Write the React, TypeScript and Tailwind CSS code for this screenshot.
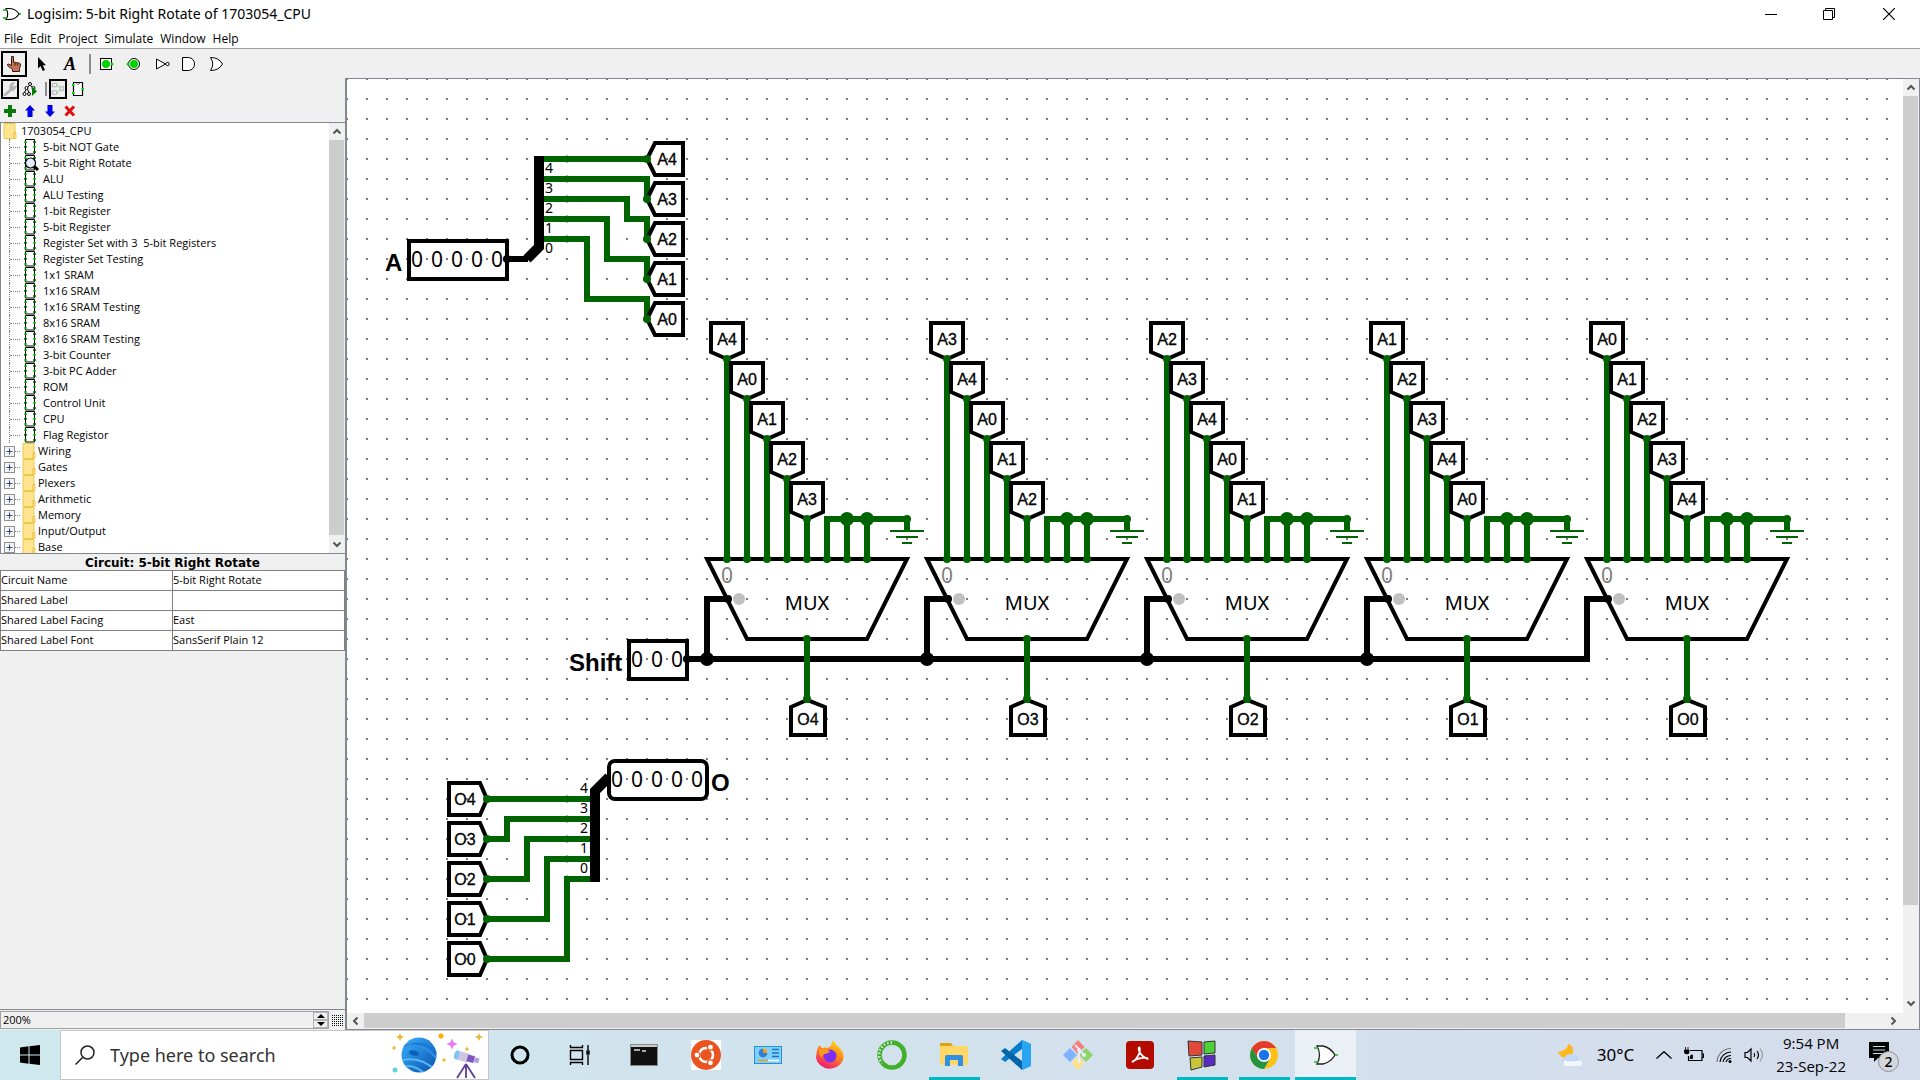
import React from "react";

const UI = "font-['Open_Sans','Noto_Sans',sans-serif]";
const GREEN = "#006400";

/* ---------- circuit canvas ---------- */

type Facing = "left" | "right" | "down" | "up";

const TAG_SHAPES: Record<Facing, string> = {
  left: "M0,0 L8,-16 H36 V16 H8 Z",
  right: "M0,0 L-7,-16 H-38 V16 H-7 Z",
  down: "M0,0 L-16,-7 V-36 H16 V-7 Z",
  up: "M0,1 L-16,8 V36 H18 V8 Z",
};
const TAG_TEXT: Record<Facing, [number, number]> = {
  left: [20, 6],
  right: [-22, 6],
  down: [0, -14],
  up: [1, 26],
};

function Tag({ x, y, facing, label }: { x: number; y: number; facing: Facing; label: string }) {
  const [tx, ty] = TAG_TEXT[facing];
  return (
    <g transform={`translate(${x},${y})`}>
      <path d={TAG_SHAPES[facing]} fill="none" stroke="#000" strokeWidth={4} />
      <text x={tx} y={ty} textAnchor="middle" fontSize={16} stroke="#000" strokeWidth={0.3} fontFamily="Liberation Sans, sans-serif">
        {label}
      </text>
      <circle r={4} fill={GREEN} />
    </g>
  );
}

function Digits({ x, y, count }: { x: number; y: number; count: number }) {
  return (
    <>
      {Array.from({ length: count }, (_, i) => (
        <text key={i} x={x + i * 20} y={y} textAnchor="middle" fontSize={21} fontFamily="Noto Sans, sans-serif">
          0
        </text>
      ))}
    </>
  );
}

const MUXES = [
  { x: 707, inputs: ["A4", "A0", "A1", "A2", "A3"], output: "O4" },
  { x: 927, inputs: ["A3", "A4", "A0", "A1", "A2"], output: "O3" },
  { x: 1147, inputs: ["A2", "A3", "A4", "A0", "A1"], output: "O2" },
  { x: 1367, inputs: ["A1", "A2", "A3", "A4", "A0"], output: "O1" },
  { x: 1587, inputs: ["A0", "A1", "A2", "A3", "A4"], output: "O0" },
];

function Mux({ x, inputs, output }: { x: number; inputs: string[]; output: string }) {
  return (
    <g transform={`translate(${x},0)`}>
      <path d="M0,559 H200 L160,639 H40 Z" fill="none" stroke="#000" strokeWidth={4} />
      <text x={20} y={583} textAnchor="middle" fontSize={21} fill="#808080" fontFamily="Noto Sans, sans-serif">0</text>
      <circle cx={32} cy={599} r={6} fill="#c0c0c0" />
      <circle cx={21} cy={599} r={4} />
      <text x={100} y={610} textAnchor="middle" fontSize={20} fontFamily="Noto Sans, sans-serif">MUX</text>
      {inputs.map((label, i) => (
        <g key={i}>
          <path d={`M${20 + i * 20},${359 + i * 40} V559`} stroke={GREEN} strokeWidth={6} />
          <Tag x={20 + i * 20} y={359 + i * 40} facing="down" label={label} />
        </g>
      ))}
      <path d="M120,559 V519 H200 V531 M140,519 V559 M160,519 V559" fill="none" stroke={GREEN} strokeWidth={6} />
      <path d="M183,531 H217 M189,537 H211 M195,543 H205" stroke={GREEN} strokeWidth={2} />
      <circle cx={140} cy={519} r={7} fill={GREEN} />
      <circle cx={160} cy={519} r={7} fill={GREEN} />
      <circle cx={200} cy={519} r={4} fill={GREEN} />
      {[0, 1, 2, 3, 4, 5, 6, 7].map((i) => (
        <circle key={i} cx={20 + i * 20} cy={559} r={4} fill={GREEN} />
      ))}
      <path d="M100,639 V699" stroke={GREEN} strokeWidth={6} />
      <circle cx={100} cy={639} r={4} fill={GREEN} />
      <Tag x={100} y={699} facing="up" label={output} />
    </g>
  );
}

function Circuit() {
  return (
    <svg className="block h-full w-full" role="img" aria-label="5-bit Right Rotate circuit">
      <defs>
        <pattern id="grid" width="20" height="20" patternUnits="userSpaceOnUse" x="6" y="18">
          <rect width="2" height="2" fill="#7c7c7c" />
        </pattern>
      </defs>
      <g transform="translate(-347,-79)">
        <rect x="340" y="70" width="1549" height="3000" fill="url(#grid)" />

        <text x="385" y="271" fontSize="24" fontWeight="bold" fontFamily="Liberation Sans, sans-serif">A</text>
        <rect x="409" y="241" width="98" height="38" fill="none" stroke="#000" strokeWidth="4" />
        <Digits x={417} y={267} count={5} />
        <path d="M505,259 H528" stroke="#000" strokeWidth="6" />
        <circle cx="507" cy="259" r="4" />
        <path d="M539,156 V247 L527,259" fill="none" stroke="#000" strokeWidth="10" />
        <g fill="none" stroke={GREEN} strokeWidth="6">
          <path d="M544,159 H647" />
          <path d="M544,179 H647 V199" />
          <path d="M544,199 H627 V219 H647 V239" />
          <path d="M544,219 H607 V259 H647 V279" />
          <path d="M544,239 H587 V299 H647 V319" />
        </g>
        {[4, 3, 2, 1, 0].map((n, i) => (
          <g key={n}>
            <path d={`M567,${155 + i * 20} l3,4 l-3,4 l-3,-4 Z`} fill={GREEN} />
            <text x={545} y={173 + i * 20} fontSize={14} fontFamily="Noto Sans, sans-serif">{n}</text>
            <Tag x={647} y={159 + i * 40} facing="left" label={`A${n}`} />
          </g>
        ))}

        <text x="569" y="671" fontSize="24" fontWeight="bold" fontFamily="Liberation Sans, sans-serif">Shift</text>
        <rect x="629" y="641" width="58" height="38" fill="none" stroke="#000" strokeWidth="4" />
        <Digits x={637} y={667} count={3} />
        <circle cx="687" cy="659" r="4" />
        <path d="M687,659 H1587 V599 H1608" fill="none" stroke="#000" strokeWidth="6" />
        {[707, 927, 1147, 1367].map((x) => (
          <g key={x}>
            <path d={`M${x},659 V599 H${x + 21}`} fill="none" stroke="#000" strokeWidth={6} />
            <circle cx={x} cy={659} r={7} />
          </g>
        ))}
        {MUXES.map((m) => (
          <Mux key={m.x} {...m} />
        ))}

        <g fill="none" stroke={GREEN} strokeWidth="6">
          <path d="M487,799 H592" />
          <path d="M487,839 H507 V819 H592" />
          <path d="M487,879 H527 V839 H592" />
          <path d="M487,919 H547 V859 H592" />
          <path d="M487,959 H567 V879 H592" />
        </g>
        <path d="M595,882 V791 L609,777" fill="none" stroke="#000" strokeWidth="10" />
        <rect x="609" y="761" width="98" height="38" rx="6" fill="#fff" stroke="#000" strokeWidth="4" />
        <path d="M626,779h2M646,779h2M666,779h2M686,779h2" stroke="#7c7c7c" strokeWidth="2" />
        <Digits x={617} y={787} count={5} />
        <text x="711" y="791" fontSize="24" fontWeight="bold" fontFamily="Liberation Sans, sans-serif">O</text>
        {[4, 3, 2, 1, 0].map((n, i) => (
          <g key={n}>
            <path d={`M567,${795 + i * 20} l3,4 l-3,4 l-3,-4 Z`} fill={GREEN} />
            <text x={588} y={793 + i * 20} textAnchor="end" fontSize={14} fontFamily="Noto Sans, sans-serif">{n}</text>
            <Tag x={487} y={799 + i * 40} facing="right" label={`O${n}`} />
          </g>
        ))}
      </g>
    </svg>
  );
}

/* ---------- small drawings ---------- */

function GateIcon({ className }: { className: string }) {
  return (
    <svg viewBox="0 0 18 16" className={className}>
      <path d="M3,2.500 H7 Q13,3 16,8 Q13,13 7,13.500 H3 Q6.500,8 3,2.500 Z" fill="#fff" stroke="#000" strokeWidth="1.100" />
      <path d="M0,4 H4 M0,12 H4 M16,8 H18" stroke="#00b000" strokeWidth="1.500" />
    </svg>
  );
}

function HandIcon() {
  return (
    <svg viewBox="0 0 16 16" className="size-4">
      <path d="M5.500,.5 h2 v5.500 l6,1.200 q1.500,.3 1,2 l-1,3.300 v3 H6.500 V13.500 L1.500,9.500 q-.5,-1.500 1,-1.500 l3,1.500 Z" fill="#c17458" stroke="#3d1a10" />
      <path d="M9,7 v2.500 M11.500,7.500 v2" stroke="#3d1a10" />
    </svg>
  );
}

function ArrowIcon() {
  return (
    <svg viewBox="0 0 16 16" className="size-4">
      <path d="M4,1 V12.500 L6.500,10 L8.800,15 L11,14 L8.800,9.200 H12 Z" fill="#000" />
    </svg>
  );
}

function InputPinIcon() {
  return (
    <svg viewBox="0 0 16 16" className="size-4">
      <rect x="2.500" y="2.500" width="11" height="11" fill="#fff" stroke="#000" />
      <circle cx="8" cy="8" r="4" fill="#00d000" />
      <circle cx="14" cy="8" r="1.500" fill="#00d000" />
    </svg>
  );
}

function OutputPinIcon() {
  return (
    <svg viewBox="0 0 16 16" className="size-4">
      <circle cx="8" cy="8" r="5.500" fill="#fff" stroke="#000" />
      <circle cx="8" cy="8" r="4" fill="#00d000" />
      <circle cx="2" cy="8" r="1.500" fill="#00d000" />
    </svg>
  );
}

function NotIcon() {
  return (
    <svg viewBox="0 0 16 16" className="size-4">
      <path d="M2.500,3 V13 L11.500,8 Z" fill="#fff" stroke="#000" />
      <circle cx="13.500" cy="8" r="1.700" fill="#fff" stroke="#000" />
    </svg>
  );
}

function AndIcon() {
  return (
    <svg viewBox="0 0 16 16" className="size-4">
      <path d="M.5,1.500 H6.500 A6,6.500 0 0 1 6.500,14.500 H.5 Z" fill="#fff" stroke="#000" />
    </svg>
  );
}

function OrIcon() {
  return (
    <svg viewBox="0 0 16 16" className="size-4">
      <path d="M.5,1.500 Q9,1.500 12.500,8 Q9,14.500 .5,14.500 Q5,8 .5,1.500 Z" fill="#fff" stroke="#000" />
    </svg>
  );
}

function WrenchIcon() {
  return (
    <svg viewBox="0 0 16 16" className="size-3.5">
      <path d="M0,15 L7.500,8 Q6.500,4 9,1.500 Q11.500,-.5 14,.8 L11,4 L12.500,5.500 L15.500,3.500 Q16,7.500 13,9.500 Q11.500,10.500 10,10 L3,16 Z" fill="#b4b4b4" />
    </svg>
  );
}

function SimTreeIcon() {
  return (
    <svg viewBox="0 0 16 16" className="size-4">
      <g fill="#fff" stroke="#000">
        <path d="M8,4 L5,7 L2,12 M8,4 L11,7 M5,7 L7,12" fill="none" />
        <circle cx="8" cy="3" r="1.500" />
        <circle cx="4.500" cy="7" r="1.500" />
        <circle cx="11.500" cy="7" r="1.500" />
        <circle cx="2.500" cy="13" r="1.500" />
        <circle cx="7" cy="13" r="1.500" />
      </g>
      <path d="M10,5.500 V15 L15,10.300 Z" fill="#008000" />
    </svg>
  );
}

function LayoutIcon() {
  return (
    <svg viewBox="0 0 16 16" className="size-3.5">
      <g fill="none" stroke="#a8a8a8">
        <path d="M1.500,1.500 h5 v4 h-5 Z M1.500,10 h5 v4 h-5 Z M10.500,5.500 h4 v4 h-4 Z" />
      </g>
      <path d="M7,3.500 h2 v3 h1 M7,12 h2 v-3 h1" fill="none" stroke="#9ade9a" />
    </svg>
  );
}

function ChipIcon() {
  return (
    <svg viewBox="0 0 12 16" className="h-4 w-3 shrink-0">
      <path d="M1.500,.5 H10.500 V15 H1.500 Z" fill="#fff" stroke="#000" />
      <path d="M0,3 h3 M9,8 h3 M0,13 h3" stroke="#00d800" strokeWidth="1.600" />
      <path d="M0,8 h3 M9,3 h3 M9,13 h3" stroke="#006400" strokeWidth="1.600" />
    </svg>
  );
}

function AppearanceIcon() {
  return (
    <svg viewBox="0 0 14 16" className="h-4 w-3.5">
      <path d="M2.500,1.500 H11.500 V14.500 H2.500 Z" fill="#fff" stroke="#000" strokeWidth="1.200" />
      <path d="M5,2 q2,3 4,0" fill="none" stroke="#808080" />
      <path d="M1,4 h2.500 M1,12 h2.500 M10.500,8 h2.500" stroke="#00d000" strokeWidth="2" />
    </svg>
  );
}

function FolderIcon() {
  return (
    <svg viewBox="0 0 13 16" className="h-4 w-3.5 shrink-0">
      <path d="M.5,.5 H11.500 V9.500 H12.500 V15.500 H.5 Z" fill="#ffe590" stroke="#e8c850" />
      <path d="M10.500,15 V9.500 H12" fill="none" stroke="#e2b93c" />
    </svg>
  );
}

function Chevron({ dir }: { dir: "up" | "down" | "left" | "right" }) {
  const d = { up: "M1.500,6.500 L5,3 L8.500,6.500", down: "M1.500,3.500 L5,7 L8.500,3.500", left: "M6.500,1.500 L3,5 L6.500,8.500", right: "M3.500,1.500 L7,5 L3.500,8.500" }[dir];
  return (
    <svg viewBox="0 0 10 10" className="size-2.5">
      <path d={d} fill="none" stroke="#555" strokeWidth="2" />
    </svg>
  );
}

/* ---------- chrome ---------- */

function TitleBar() {
  return (
    <header className="flex h-7 items-center bg-white text-black">
      <GateIcon className="ml-[3px] h-4 w-[18px]" />
      <h1 className="ml-1.5 font-['Noto_Sans',sans-serif] text-[14px] leading-7">Logisim: 5-bit Right Rotate of 1703054_CPU</h1>
      <div className="ml-auto flex">
        <button aria-label="Minimize" className="grid h-7 w-[58px] place-items-center">
          <svg viewBox="0 0 12 12" className="size-3"><path d="M0,6.500 H12" stroke="#000" /></svg>
        </button>
        <button aria-label="Restore" className="grid h-7 w-[58px] place-items-center">
          <svg viewBox="0 0 12 12" className="size-3"><path d="M.5,2.500 H9.500 V11.500 H.5 Z M2.500,2.500 V.5 H11.500 V9.500 H9.500" fill="none" stroke="#000" /></svg>
        </button>
        <button aria-label="Close" className="grid h-7 w-[62px] place-items-center">
          <svg viewBox="0 0 12 12" className="size-3"><path d="M0,0 L12,12 M12,0 L0,12" stroke="#000" strokeWidth="1.200" /></svg>
        </button>
      </div>
    </header>
  );
}

function MenuBar() {
  return (
    <nav className="flex h-5 gap-[7px] bg-white pl-1 pt-px text-[12px] leading-5">
      {["File", "Edit", "Project", "Simulate", "Window", "Help"].map((m) => (
        <button key={m}>{m}</button>
      ))}
    </nav>
  );
}

function ToolButton({ label, selected, children }: { label: string; selected?: boolean; children: React.ReactNode }) {
  return (
    <button aria-label={label} className={selected ? "grid size-[26px] place-items-center border-2 border-black" : "grid size-[26px] place-items-center"}>
      {children}
    </button>
  );
}

function SmallButton({ label, selected, children }: { label: string; selected?: boolean; children: React.ReactNode }) {
  return (
    <button aria-label={label} className={selected ? "grid h-5 w-[18px] place-items-center border-2 border-black" : "grid h-5 w-[18px] place-items-center"}>
      {children}
    </button>
  );
}

function Toolbar() {
  return (
    <div className="flex h-[30px] items-center gap-0.5 border-t border-[#a0a0a0] pl-px pt-px">
      <ToolButton label="Poke Tool" selected><HandIcon /></ToolButton>
      <ToolButton label="Edit Tool"><ArrowIcon /></ToolButton>
      <ToolButton label="Text Tool">
        <span className="font-['Liberation_Serif',serif] text-[18px] font-bold italic leading-none">A</span>
      </ToolButton>
      <div className="flex h-5 w-1.5 justify-end"><div className="w-0.5 bg-[#8c8c8c]" /></div>
      <ToolButton label="Input Pin"><InputPinIcon /></ToolButton>
      <ToolButton label="Output Pin"><OutputPinIcon /></ToolButton>
      <ToolButton label="NOT Gate"><NotIcon /></ToolButton>
      <ToolButton label="AND Gate"><AndIcon /></ToolButton>
      <ToolButton label="OR Gate"><OrIcon /></ToolButton>
    </div>
  );
}

function ExplorerToolbars() {
  return (
    <>
      <div className="mt-px flex h-5 items-center gap-0.5 pl-px">
        <SmallButton label="Show toolbox" selected><WrenchIcon /></SmallButton>
        <SmallButton label="Show simulation tree"><SimTreeIcon /></SmallButton>
        <div className="flex h-3.5 w-1.5 justify-end"><div className="w-0.5 bg-[#8c8c8c]" /></div>
        <SmallButton label="Edit circuit layout" selected><LayoutIcon /></SmallButton>
        <SmallButton label="Edit circuit appearance"><AppearanceIcon /></SmallButton>
      </div>
      <div className="flex h-[23px] items-center gap-0.5 pl-px">
        <SmallButton label="Add circuit">
          <svg viewBox="0 0 12 12" className="size-3"><path d="M6,0 V12 M0,6 H12" stroke="#0a7a0a" strokeWidth="4" /></svg>
        </SmallButton>
        <SmallButton label="Move up">
          <svg viewBox="0 0 12 12" className="size-3"><path d="M6,0 L11,5.500 H8.500 V12 H3.500 V5.500 H1 Z" fill="#0000e6" /></svg>
        </SmallButton>
        <SmallButton label="Move down">
          <svg viewBox="0 0 12 12" className="size-3"><path d="M6,12 L11,6.500 H8.500 V0 H3.500 V6.500 H1 Z" fill="#0000e6" /></svg>
        </SmallButton>
        <SmallButton label="Remove circuit">
          <svg viewBox="0 0 12 12" className="size-3"><path d="M1.500,1.500 L10,10.500 M10,1.500 L1.500,10.500" stroke="#e01010" strokeWidth="3" /></svg>
        </SmallButton>
      </div>
    </>
  );
}

const CIRCUITS = [
  "5-bit NOT Gate", "5-bit Right Rotate", "ALU", "ALU Testing", "1-bit Register", "5-bit Register",
  "Register Set with 3  5-bit Registers", "Register Set Testing", "1x1 SRAM", "1x16 SRAM", "1x16 SRAM Testing",
  "8x16 SRAM", "8x16 SRAM Testing", "3-bit Counter", "3-bit PC Adder", "ROM", "Control Unit", "CPU", "Flag Registor",
];
const LIBRARIES = ["Wiring", "Gates", "Plexers", "Arithmetic", "Memory", "Input/Output", "Base"];

function Tree() {
  return (
    <div className="flex h-[432px] border-y border-l border-[#828790] bg-white">
      <ul className="min-w-0 flex-1 overflow-hidden whitespace-pre text-[11px] leading-4">
        <li className="flex h-4 pl-0.5"><FolderIcon /><span className="ml-1">1703054_CPU</span></li>
        {CIRCUITS.map((c) => (
          <li key={c} className="flex h-4">
            <span className="ml-2 flex h-4 w-[11px] items-center border-l border-dotted border-[#808080]">
              <span className="w-full border-t border-dotted border-[#808080]" />
            </span>
            <span className="relative ml-1 flex">
              <ChipIcon />
              {c === "5-bit Right Rotate" && (
                <svg viewBox="0 0 16 16" className="absolute left-0 top-0 size-4">
                  <path d="M10,11 L14,15" stroke="#000" strokeWidth="3" />
                  <circle cx="6.500" cy="8" r="5" fill="#e8ecff" stroke="#000" strokeWidth="1.200" />
                </svg>
              )}
            </span>
            <span className="ml-[7px]">{c}</span>
          </li>
        ))}
        {LIBRARIES.map((l) => (
          <li key={l} className="flex h-4">
            <button aria-label={`Expand ${l}`} className="ml-[3px] mt-[3px] size-[11px] shrink-0">
              <svg viewBox="0 0 11 11" className="size-[11px]">
                <rect x=".5" y=".5" width="10" height="10" fill="#f4f4f4" stroke="#919191" />
                <path d="M2.500,5.500 H8.500 M5.500,2.500 V8.500" stroke="#31487e" />
              </svg>
            </button>
            <span className="mt-2 w-[5px] border-t border-dotted border-[#808080]" />
            <span className="ml-0.5 flex"><FolderIcon /></span>
            <span className="ml-0.5">{l}</span>
          </li>
        ))}
      </ul>
      <div className="flex w-[15px] flex-col bg-[#f0f0f0]">
        <button aria-label="Scroll up" className="grid h-[17px] place-items-center"><Chevron dir="up" /></button>
        <div className="flex-1 bg-[#cdcdcd]" />
        <button aria-label="Scroll down" className="grid h-[18px] place-items-center"><Chevron dir="down" /></button>
      </div>
      <div className="w-px bg-[#f0f0f0]" />
    </div>
  );
}

const ATTRIBUTES: [string, string][] = [
  ["Circuit Name", "5-bit Right Rotate"],
  ["Shared Label", ""],
  ["Shared Label Facing", "East"],
  ["Shared Label Font", "SansSerif Plain 12"],
];

function Attributes() {
  return (
    <section className="flex flex-1 flex-col border-b border-[#828790] bg-[#f0f0f0]">
      <h2 className="h-4 text-center font-['DejaVu_Sans',sans-serif] text-[12px] font-bold leading-[18px]">Circuit: 5-bit Right Rotate</h2>
      <table className="w-full table-fixed border-collapse bg-white text-[11px]">
        <tbody>
          {ATTRIBUTES.map(([k, v]) => (
            <tr key={k} className="h-5 align-top">
              <th scope="row" className="border border-[#808080] p-0 text-left font-normal leading-[17px]">{k}</th>
              <td className="border border-[#808080] p-0 leading-[17px]">{v}</td>
            </tr>
          ))}
        </tbody>
      </table>
    </section>
  );
}

function ZoomRow() {
  return (
    <div className="flex h-5 items-center bg-[#f0f0f0]">
      <div className="flex h-[18px] flex-1 border border-[#a0a0a0] bg-[#f0f0f0]">
        <input aria-label="Zoom" defaultValue="200%" className="min-w-0 flex-1 bg-transparent pl-0.5 text-[11px] leading-4 outline-none" />
        <div className="flex w-[15px] flex-col">
          <button aria-label="Zoom in" className="grid flex-1 place-items-center border border-[#b4b4b4]">
            <svg viewBox="0 0 8 4" className="h-1 w-2"><path d="M4,0 L8,4 H0 Z" /></svg>
          </button>
          <button aria-label="Zoom out" className="grid flex-1 place-items-center border border-[#b4b4b4]">
            <svg viewBox="0 0 8 4" className="h-1 w-2"><path d="M0,0 H8 L4,4 Z" /></svg>
          </button>
        </div>
      </div>
      <button aria-label="Toggle grid" className="grid w-4 place-items-center">
        <svg viewBox="0 0 11 11" className="size-[11px]">
          {[0, 2, 4, 6, 8, 10].map((y) => (
            <path key={y} d={`M0,${y + 0.5} H11`} stroke="#111" strokeDasharray="1 1" />
          ))}
        </svg>
      </button>
    </div>
  );
}

function CanvasPane() {
  return (
    <main className="flex min-w-0 flex-1 flex-col border-y border-l-2 border-r border-[#828790] bg-white">
      <div className="flex min-h-0 flex-1">
        <div className="min-w-0 flex-1 overflow-hidden"><Circuit /></div>
        <div className="flex w-4 flex-col bg-[#f0f0f0]">
          <button aria-label="Scroll canvas up" className="grid h-[17px] w-[15px] place-items-center"><Chevron dir="up" /></button>
          <div className="w-[15px] flex-[809] bg-[#cdcdcd]" />
          <div className="flex-[88]" />
          <button aria-label="Scroll canvas down" className="grid h-5 w-[15px] place-items-center"><Chevron dir="down" /></button>
        </div>
      </div>
      <div className="flex h-4 bg-[#f0f0f0] pr-4">
        <button aria-label="Scroll canvas left" className="grid h-[15px] w-[17px] place-items-center"><Chevron dir="left" /></button>
        <div className="h-[15px] flex-[1481] bg-[#cdcdcd]" />
        <div className="flex-[38]" />
        <button aria-label="Scroll canvas right" className="grid h-[15px] w-5 place-items-center"><Chevron dir="right" /></button>
      </div>
    </main>
  );
}

/* ---------- taskbar ---------- */

function SearchArt() {
  const star = "M0,-4 L1.200,-1.200 L4,0 L1.200,1.200 L0,4 L-1.200,1.200 L-4,0 L-1.200,-1.200 Z";
  return (
    <svg viewBox="0 0 96 48" className="h-12 w-24 shrink-0">
      <defs>
        <linearGradient id="planet" x1="0" y1="0" x2="1" y2="1">
          <stop offset="0" stopColor="#3cb4fb" />
          <stop offset="1" stopColor="#0a4fae" />
        </linearGradient>
        <clipPath id="planetClip"><circle cx="27" cy="24" r="17.500" /></clipPath>
      </defs>
      <circle cx="27" cy="24" r="17.500" fill="url(#planet)" />
      <g clipPath="url(#planetClip)" fill="none" stroke="#2f8fe6" strokeWidth="2">
        <path d="M8,17 Q30,6 48,24" stroke="#1478d4" />
        <path d="M8,30 Q28,24 44,40" stroke="#55b8f7" />
        <path d="M14,14 Q34,12 46,30" />
        <path d="M10,36 Q22,32 34,44" stroke="#55b8f7" />
      </g>
      <ellipse cx="22" cy="22" rx="5" ry="2.500" fill="#0b5fbd" transform="rotate(15 22 22)" />
      <path d={star} transform="translate(8,6)" fill="#e8b830" />
      <path d={star} transform="translate(2,17) scale(.7)" fill="#e8b830" />
      <circle cx="3" cy="39" r="2.500" fill="#5fd3e0" />
      <circle cx="49" cy="5" r="2.500" fill="#ffac00" />
      <path d={star} transform="translate(60,13) scale(1.400)" fill="#e879f9" />
      <path d={star} transform="translate(87,6)" fill="#e8b830" />
      <path d={star} transform="translate(75,18) scale(.7)" fill="#e8b830" />
      <path d={star} transform="translate(52,29) scale(.7)" fill="#e8b830" />
      <g transform="rotate(15 74 28)">
        <rect x="64" y="22" width="12" height="9" fill="#cdc6e0" />
        <rect x="75" y="23" width="7" height="7" fill="#7e57c2" />
        <rect x="82" y="24" width="5" height="5" fill="#b39ddb" />
        <ellipse cx="64" cy="26.500" rx="2.500" ry="4.500" fill="#7cc5f5" />
      </g>
      <path d="M74,33 L65,47 M74,33 V47 M74,33 L83,47" stroke="#5e3b9e" strokeWidth="1.800" />
    </svg>
  );
}

const APPS: { name: string; open?: boolean; active?: boolean; icon: React.ReactNode }[] = [
  {
    name: "Cortana",
    icon: <circle cx="16" cy="16" r="8" fill="none" stroke="#000" strokeWidth="3" />,
  },
  {
    name: "Task View",
    icon: (
      <g fill="none" stroke="#000" strokeWidth="1.400" transform="translate(-2,0)">
        <path d="M6.500,11.500 H18.500 V20.500 H6.500 Z M6.500,6 V8.500 H18.500 V6 M6.500,26 V23.500 H18.500 V26 M24,6 V11 M24,16 V26" />
        <rect x="23" y="12" width="2" height="3" fill="#000" />
      </g>
    ),
  },
  {
    name: "Command Prompt",
    icon: (
      <>
        <rect x="2.500" y="5.500" width="27" height="21" fill="#111" stroke="#888" />
        <rect x="3" y="6" width="26" height="2" fill="#ccc" />
        <path d="M6,11 H12 M14,12 H18" stroke="#ddd" strokeWidth="1.500" />
      </>
    ),
  },
  {
    name: "Ubuntu",
    icon: (
      <>
        <rect x="1" y="1" width="30" height="30" fill="#fff" />
        <circle cx="16" cy="16" r="15" fill="#e95420" />
        <circle cx="16" cy="16" r="7" fill="none" stroke="#fff" strokeWidth="2.500" />
        <g fill="#fff" stroke="#e95420" strokeWidth="1.200">
          <circle cx="7" cy="16" r="3" />
          <circle cx="20.500" cy="8.200" r="3" />
          <circle cx="20.500" cy="23.800" r="3" />
        </g>
      </>
    ),
  },
  {
    name: "Control Panel",
    icon: (
      <>
        <rect x="2.500" y="7.500" width="27" height="17" fill="#7ed0fb" stroke="#2a8fd0" />
        <circle cx="11" cy="14" r="4.500" fill="#fff" />
        <path d="M11,14 H15.500 A4.500,4.500 0 1 1 11,9.500 Z" fill="#2a7fd8" />
        <path d="M11,14 V9.500 A4.500,4.500 0 0 1 15.500,14 Z" fill="#f59e0b" />
        <path d="M20,10.500 H27 M20,14 H27 M20,17.500 H27" stroke="#1976c5" strokeWidth="1.500" />
        <path d="M6,21.500 H16" stroke="#f59e0b" strokeWidth="1.500" />
        <path d="M16,21.500 H27" stroke="#fff" strokeWidth="1.500" />
      </>
    ),
  },
  {
    name: "Firefox",
    icon: (
      <>
        <defs>
          <linearGradient id="fox" x1=".8" y1="0" x2=".3" y2="1">
            <stop offset="0" stopColor="#ffe226" />
            <stop offset=".45" stopColor="#ff8a16" />
            <stop offset="1" stopColor="#f0157a" />
          </linearGradient>
        </defs>
        <path d="M19,1 Q22,6 26,9 Q31,15 29,21 A14,13 0 0 1 2,19 Q2,12 5,6 L8,9 Q11,8 14,9 Q18,6 19,1 Z" fill="url(#fox)" />
        <circle cx="16" cy="17" r="6.500" fill="#7b2ff2" />
        <path d="M5,10 Q12,8 16,13 Q13,14 12,15 Q9,14 8,19 Q4,16 5,10 Z" fill="#ff9a1f" />
      </>
    ),
  },
  {
    name: "Anaconda",
    icon: (
      <>
        <circle cx="16" cy="16" r="12.500" fill="none" stroke="#43b02a" strokeWidth="4.500" />
        <path d="M16,3.500 A12.500,12.500 0 0 0 6,24" fill="none" stroke="#d3e6ec" strokeWidth="2.500" strokeDasharray="1.500 2" />
      </>
    ),
  },
  {
    name: "File Explorer",
    open: true,
    icon: (
      <>
        <path d="M2,4 H13 L15,7 V10 H2 Z" fill="#e0a012" />
        <rect x="2" y="7" width="28" height="19" rx="1" fill="#ffd766" />
        <path d="M7,27 V18 Q7,16 9,16 H23 Q25,16 25,18 V27 H20 V21 H12 V27 Z" fill="#2f8fe0" />
      </>
    ),
  },
  {
    name: "Visual Studio Code",
    icon: (
      <>
        <path d="M22,1 L31,5 V27 L22,31 Z" fill="#2aa5f2" />
        <path d="M22,1 V10 L5,23 L1,20 Z" fill="#0a7cc9" />
        <path d="M22,31 V22 L5,9 L1,12 Z" fill="#0065a9" />
        <path d="M22,1 L24,9 V23 L22,31 L31,27 V5 Z" fill="#2aa5f2" />
      </>
    ),
  },
  {
    name: "Git",
    icon: (
      <>
        <path d="M16,1 L22.500,8 L16,15 L9.500,8 Z" fill="#f57f7f" />
        <path d="M8,9 L15,16 L8,23 L1,16 Z" fill="#80b3ff" />
        <path d="M24,9 L31,16 L24,23 L17,16 Z" fill="#8fd46a" />
        <path d="M16,17 L22.500,24 L16,31 L9.500,24 Z" fill="#ffe08a" />
        <path d="M13,6 L17,10 V22 M17,11 L22,16" fill="none" stroke="#e8edf5" strokeWidth="1.800" />
        <circle cx="17" cy="11" r="2" fill="#e8edf5" />
        <circle cx="22" cy="16" r="2" fill="#e8edf5" />
        <circle cx="17" cy="22" r="2" fill="#e8edf5" />
      </>
    ),
  },
  {
    name: "Acrobat",
    icon: (
      <>
        <rect x="2" y="2" width="28" height="28" rx="4" fill="#b30b00" />
        <path d="M8,23 C13,21 17,13 15.500,8.500 C13.500,8 14.500,16 23.500,20 C25,18 14,18 8,23 Z" fill="none" stroke="#fff" strokeWidth="1.800" />
      </>
    ),
  },
  {
    name: "Code Blocks",
    open: true,
    icon: (
      <>
        <path d="M2,2 L16,3 V16 L3,17 Z" fill="#e04a3c" stroke="#333" />
        <path d="M18,3 L29,2 V14 L18,15 Z" fill="#4cd137" stroke="#333" />
        <path d="M4,19 L16,18 V28 L5,31 Z" fill="#c9c53a" stroke="#333" />
        <path d="M18,17 L29,16 V26 L18,28 Z" fill="#5a2bc0" stroke="#333" />
      </>
    ),
  },
  {
    name: "Chrome",
    open: true,
    icon: (
      <>
        <circle cx="16" cy="16" r="14" fill="#fbc116" />
        <path d="M16,9 H28.100 A14,14 0 0 0 3.900,9 L10,19.500 Z" fill="#e33b2e" />
        <path d="M3.900,9 A14,14 0 0 0 16,30 L22,19.500 L10,19.500 Z" fill="#229342" />
        <circle cx="16" cy="16" r="7" fill="#fff" />
        <circle cx="16" cy="16" r="5.200" fill="#1a73e8" />
      </>
    ),
  },
  {
    name: "Logisim",
    open: true,
    active: true,
    icon: (
      <>
        <path d="M7,7 H13 Q21,9 25,16 Q21,23 13,25 H7 Q12,16 7,7 Z" fill="#fff" stroke="#222" strokeWidth="1.300" />
        <path d="M4,9 H8 M4,23 H8 M25,16 H28" stroke="#1db81d" strokeWidth="1.500" />
      </>
    ),
  },
];

function Taskbar() {
  return (
    <footer className="flex h-[50px] shrink-0 items-stretch bg-gradient-to-r from-[#cfe8ee] via-[#d2e2ed] to-[#d5dcec] font-['Noto_Sans',sans-serif]">
      <button aria-label="Start" className="grid w-[60px] place-items-center">
        <svg viewBox="0 0 20 20" className="size-5"><path d="M0,2.500 L8.500,1.300 V9.500 H0 Z M9.500,1.200 L20,0 V9.500 H9.500 Z M0,10.500 H8.500 V18.700 L0,17.500 Z M9.500,10.500 H20 V20 L9.500,18.800 Z" /></svg>
      </button>
      <label className="flex w-[429px] items-center border border-[#c6c6c6] bg-white pl-3.5">
        <svg viewBox="0 0 20 20" className="size-5 shrink-0"><circle cx="12.500" cy="7.500" r="6.500" fill="none" stroke="#222" strokeWidth="1.500" /><path d="M8,12 L.5,19.500" stroke="#222" strokeWidth="1.500" /></svg>
        <input aria-label="Search" placeholder="Type here to search" className="ml-[15px] min-w-0 flex-1 bg-transparent text-[18px] outline-none placeholder:text-[#333]" />
        <SearchArt />
      </label>
      <div className="flex">
        {APPS.map((a) => (
          <button
            key={a.name}
            aria-label={a.name}
            className={a.active ? "flex w-[61px] flex-col items-center bg-[#ebf0f6]" : "flex w-[62px] flex-col items-center"}
          >
            <svg viewBox="0 0 32 32" className="my-auto size-8">{a.icon}</svg>
            {a.open && <span className={a.active ? "-mt-[3px] h-[3px] w-full bg-[#00b7c3]" : "-mt-[3px] h-[3px] w-[51px] bg-[#00b7c3]"} />}
          </button>
        ))}
      </div>
      <div className="ml-auto flex items-center text-black">
        <button className="flex items-center gap-3 text-[17px]">
          <svg viewBox="0 0 28 24" className="h-6 w-7">
            <path d="M11,1 Q11,7 1,9 Q3,14 8,15 Q17,14 16,6 Q15,2 11,1 Z" fill="#ffb81c" />
            <path d="M8,23 A5,5 0 0 1 8,14 Q11,9 16,12 Q21,12 21,16 A3.500,3.500 0 0 1 23,23 Z" fill="#c3d8f7" />
            <path d="M8,23 A4,4 0 0 1 8,17 Q14,20 24,17 Q27,21 23,23 Z" fill="#f2f7ff" />
          </svg>
          <span>30°C</span>
        </button>
        <button aria-label="Show hidden icons" className="ml-5 grid size-5 place-items-center">
          <svg viewBox="0 0 16 8" className="h-2 w-4"><path d="M.5,7.500 L8,.7 L15.500,7.500" fill="none" stroke="#000" strokeWidth="1.300" /></svg>
        </button>
        <button aria-label="Battery" className="ml-2.5">
          <svg viewBox="0 0 20 16" className="h-4 w-5"><path d="M6,3.500 H18 V13.500 H4.500 V9 M18,7 H19.500 V10.500 H18" fill="none" stroke="#000" strokeWidth="1.200" /><path d="M7,8 H8.500 V11.500 H6 Z M.5,3 H5 V6 Q3,8 .5,6 Z M1.500,0 V3 M4,0 V3" fill="#000" stroke="#000" strokeWidth=".8" /></svg>
        </button>
        <button aria-label="Network" className="ml-3">
          <svg viewBox="0 0 16 16" className="size-4"><g fill="none" stroke="#000" strokeWidth="1.200"><path d="M1,15 A14,14 0 0 1 15,1.500" stroke="#777" /><path d="M4,15 A11,11 0 0 1 15,5" /><path d="M7,15 A8,8 0 0 1 15,8.500" /><path d="M10,15 A5,5 0 0 1 15,11.500" /></g><circle cx="14" cy="14.500" r="1.500" /></svg>
        </button>
        <button aria-label="Volume" className="ml-3">
          <svg viewBox="0 0 20 16" className="h-4 w-5"><g fill="none" stroke="#000" strokeWidth="1.200"><path d="M1,5.500 H3.500 L7,2 V14 L3.500,10.500 H1 Z" /><path d="M10,6 Q11.500,8 10,10" /><path d="M13,4 Q16,8 13,12" /><path d="M16,1.500 Q21,8 16,14.500" stroke="#999" /></g></svg>
        </button>
        <div className="ml-3 text-center font-['Open_Sans','Noto_Sans',sans-serif] text-[15px] leading-[23px]">
          <p>9:54 PM</p>
          <p>23-Sep-22</p>
        </div>
        <button aria-label="Notifications, 2 new" className="relative ml-[23px] mr-[21px] h-[34px] w-[30px]">
          <svg viewBox="0 0 20 20" className="absolute left-0 top-1 size-5"><path d="M0,0 H20 V16 H9 L5,20 V16 H0 Z" /><path d="M4,4.500 H16 M4,8 H16 M4,11.500 H16" stroke="#cfd8e6" strokeWidth="1.200" /></svg>
          <span className="absolute bottom-0 right-0 grid size-[21px] place-items-center rounded-full border border-[#8a8f96] bg-[#d4d6da] text-[14px] font-medium leading-none">2</span>
        </button>
      </div>
    </footer>
  );
}

export default function App() {
  return (
    <div className={`${UI} flex h-screen flex-col overflow-hidden bg-[#f0f0f0] text-black`}>
      <TitleBar />
      <MenuBar />
      <Toolbar />
      <div className="flex min-h-0 flex-1">
        <aside className="flex w-[345px] shrink-0 flex-col">
          <ExplorerToolbars />
          <Tree />
          <Attributes />
          <ZoomRow />
        </aside>
        <CanvasPane />
      </div>
      <Taskbar />
    </div>
  );
}
